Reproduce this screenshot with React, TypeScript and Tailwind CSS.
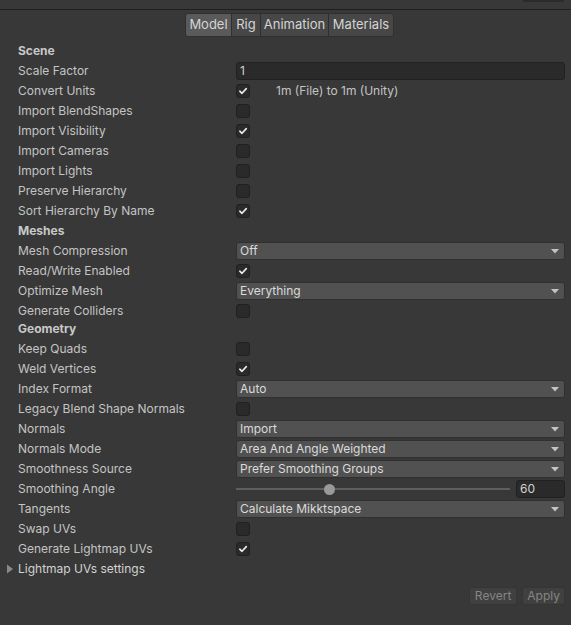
import React from "react";

type Kind =
  | { t: "header"; label: string; mt?: string }
  | { t: "check"; label: string; on?: boolean; note?: string }
  | { t: "select"; label: string; value: string }
  | { t: "text"; label: string; value: string }
  | { t: "slider"; label: string; value: number; pct: number }
  | { t: "fold"; label: string };

const rows: Kind[] = [
  { t: "header", label: "Scene" },
  { t: "text", label: "Scale Factor", value: "1" },
  { t: "check", label: "Convert Units", on: true, note: "1m (File) to 1m (Unity)" },
  { t: "check", label: "Import BlendShapes" },
  { t: "check", label: "Import Visibility", on: true },
  { t: "check", label: "Import Cameras" },
  { t: "check", label: "Import Lights" },
  { t: "check", label: "Preserve Hierarchy" },
  { t: "check", label: "Sort Hierarchy By Name", on: true },
  { t: "header", label: "Meshes" },
  { t: "select", label: "Mesh Compression", value: "Off" },
  { t: "check", label: "Read/Write Enabled", on: true },
  { t: "select", label: "Optimize Mesh", value: "Everything" },
  { t: "check", label: "Generate Colliders" },
  { t: "header", label: "Geometry", mt: "-mt-[2px]" },
  { t: "check", label: "Keep Quads" },
  { t: "check", label: "Weld Vertices", on: true },
  { t: "select", label: "Index Format", value: "Auto" },
  { t: "check", label: "Legacy Blend Shape Normals" },
  { t: "select", label: "Normals", value: "Import" },
  { t: "select", label: "Normals Mode", value: "Area And Angle Weighted" },
  { t: "select", label: "Smoothness Source", value: "Prefer Smoothing Groups" },
  { t: "slider", label: "Smoothing Angle", value: 60, pct: 34 },
  { t: "select", label: "Tangents", value: "Calculate Mikktspace" },
  { t: "check", label: "Swap UVs" },
  { t: "check", label: "Generate Lightmap UVs", on: true },
  { t: "fold", label: "Lightmap UVs settings" },
];

function Checkbox({ on }: { on?: boolean }) {
  return (
    <div className="w-[14px] h-[14px] rounded-[3px] bg-[#2a2a2a] border border-[#202020] flex items-center justify-center">
      {on && (
        <svg width="10" height="10" viewBox="0 0 10 10">
          <path d="M1.8 5.2 L4 7.3 L8.3 2.6" fill="none" stroke="#eeeeee" strokeWidth="1.6" strokeLinecap="round" strokeLinejoin="round" />
        </svg>
      )}
    </div>
  );
}

function Control({ row }: { row: Kind }) {
  switch (row.t) {
    case "check":
      return (
        <div className="flex items-center">
          <Checkbox on={row.on} />
          {row.note && <span className="ml-[26px] text-[#c4c4c4]">{row.note}</span>}
        </div>
      );
    case "text":
      return (
        <div className="h-[18px] rounded-[3px] bg-[#2a2a2a] border border-[#212121] pl-[3px] flex items-center text-[#d2d2d2]">
          {row.value}
        </div>
      );
    case "select":
      return (
        <div className="h-[18px] rounded-[3px] bg-[#515151] border border-[#303030] pl-[3px] pr-[5px] flex items-center justify-between text-[#dadada]">
          <span>{row.value}</span>
          <svg width="8" height="6" viewBox="0 0 8 6">
            <path d="M0 1 L8 1 L4 5.5 Z" fill="#c4c4c4" />
          </svg>
        </div>
      );
    case "slider":
      return (
        <div className="flex items-center h-[18px]">
          <div className="relative flex-1 h-[2px] bg-[#5e5e5e] mr-[6px]">
            <div
              className="absolute top-1/2 w-[11px] h-[11px] -mt-[5.5px] -ml-[5.5px] rounded-full bg-[#999999]"
              style={{ left: `${row.pct}%` }}
            />
          </div>
          <div className="w-[49px] h-[18px] rounded-[3px] bg-[#2a2a2a] border border-[#212121] pl-[3px] flex items-center text-[#d2d2d2]">
            {row.value}
          </div>
        </div>
      );
    default:
      return null;
  }
}

export default function App() {
  return (
    <div
      className="w-[571px] h-[625px] bg-[#383838] text-[12px] text-[#c4c4c4] flex flex-col overflow-hidden"
      style={{ fontFamily: "Inter, 'Liberation Sans', sans-serif" }}
    >
      <div className="h-[9px] relative">
        <div className="absolute right-[7px] top-0 w-[41px] h-[2px] bg-[#2b2b2b]" />
      </div>
      <div className="h-[1px] bg-[#1f1f1f]" />

      <div className="flex justify-center mt-[3px] pl-[8px]">
        <div className="flex h-[24px] text-[13px] text-[#d4d4d4] rounded-[3px] overflow-hidden border border-[#2f2f2f]">
          <div className="w-[46px] justify-center bg-[#5a5a5a] flex items-center border-r border-[#2f2f2f]">Model</div>
          <div className="w-[29px] justify-center bg-[#474747] flex items-center border-r border-[#2f2f2f]">Rig</div>
          <div className="w-[68px] justify-center bg-[#474747] flex items-center border-r border-[#2f2f2f]">Animation</div>
          <div className="w-[64px] justify-center bg-[#474747] flex items-center">Materials</div>
        </div>
      </div>

      <div className="flex flex-col mt-[5px]">
        {rows.map((r, i) => {
          if (r.t === "header")
            return (
              <div key={i} className={`h-[18px] mb-[2px] pl-[18px] flex items-center font-bold text-[#c8c8c8] ${r.mt ?? ""}`}>
                {r.label}
              </div>
            );
          if (r.t === "fold")
            return (
              <div key={i} className="h-[18px] mb-[2px] pl-[6px] flex items-center text-[#d2d2d2]">
                <svg width="8" height="10" viewBox="0 0 8 10" className="mr-[4px]">
                  <path d="M1 0.5 L7 5 L1 9.5 Z" fill="#8a8a8a" />
                </svg>
                {r.label}
              </div>
            );
          return (
            <div key={i} className="h-[18px] mb-[2px] flex items-center">
              <div className="w-[236px] pl-[18px] shrink-0">{r.label}</div>
              <div className="flex-1 pr-[6px]">
                <Control row={r} />
              </div>
            </div>
          );
        })}
      </div>

      <div className="flex justify-end gap-[5px] pr-[6px] mt-[7px]">
        <div className="h-[18px] px-[5px] rounded-[3px] bg-[#404040] border border-[#353535] flex items-center text-[#858585]">
          Revert
        </div>
        <div className="h-[18px] px-[4px] rounded-[3px] bg-[#404040] border border-[#353535] flex items-center text-[#858585]">
          Apply
        </div>
      </div>
    </div>
  );
}
